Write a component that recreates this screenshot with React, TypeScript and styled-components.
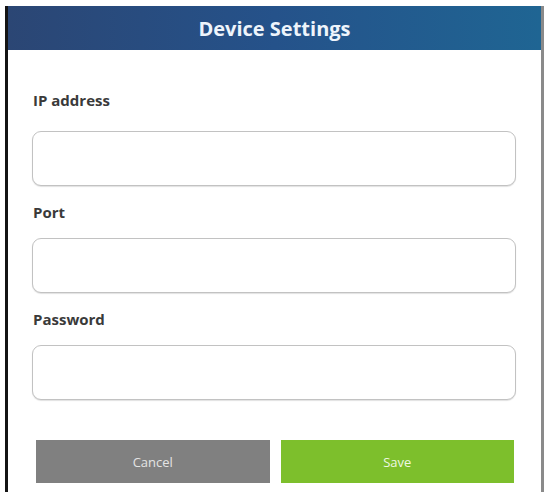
import React from 'react';
import styled, { createGlobalStyle } from 'styled-components';

const GlobalStyle = createGlobalStyle`
    html, body {
        margin: 0;
        padding: 0;
        background: #fff;
        font-family: "Open Sans", "Noto Sans", sans-serif;
    }
`;

const Panel = styled.div`
    margin: 6px 4px 0 5px;
    min-height: 486px;
    box-sizing: border-box;
    border-left: 3px solid #141414;
    border-right: 3px solid #8a8a8a;
    display: flex;
    flex-direction: column;
`;

const Header = styled.div`
    height: 44px;
    display: flex;
    align-items: center;
    justify-content: center;
    background: linear-gradient(90deg, #2b4674 0%, #25528a 50%, #1f6593 100%);
    color: #eef4fb;
    font-size: 20px;
    font-weight: 700;
`;

const Body = styled.div`
    padding: 40px 25px 0 24px;
    display: flex;
    flex-direction: column;
`;

const Label = styled.label`
    display: block;
    height: 20px;
    line-height: 20px;
    font-size: 15px;
    font-weight: 700;
    color: #3a3a3a;
    margin: 16px 0 16px 1px;

    &:first-child {
        margin-top: 0;
        margin-bottom: 21px;
    }
`;

const Input = styled.input`
    box-sizing: border-box;
    width: 100%;
    height: 55px;
    border: 1.5px solid #c2c2c2;
    border-radius: 9px;
    background: #fff;
    box-shadow: 0 1px 1px rgba(0, 0, 0, 0.12);
    outline: none;
    padding: 0 12px;
    font-size: 15px;
`;

const ButtonRow = styled.div`
    display: flex;
    gap: 11px;
    margin: 40px 2px 8px 4px;
`;

interface ActionProps {
    $tone: 'grey' | 'green';
}

const ActionButton = styled.button<ActionProps>`
    flex: 1;
    height: 43px;
    border: none;
    border-radius: 0;
    cursor: pointer;
    font-family: inherit;
    font-size: 13px;
    background: ${(p) => (p.$tone === 'grey' ? '#808080' : '#7dbf2c')};
    color: ${(p) => (p.$tone === 'grey' ? '#e4e4e4' : '#eef8e2')};
`;

const fields = ['IP address', 'Port', 'Password'];

const App = () => (
    <>
        <GlobalStyle />
        <Panel>
            <Header>Device Settings</Header>
            <Body>
                {fields.map((f) => (
                    <React.Fragment key={f}>
                        <Label>{f}</Label>
                        <Input type={f === 'Password' ? 'password' : 'text'} />
                    </React.Fragment>
                ))}
                <ButtonRow>
                    <ActionButton $tone="grey">Cancel</ActionButton>
                    <ActionButton $tone="green">Save</ActionButton>
                </ButtonRow>
            </Body>
        </Panel>
    </>
);

export default App;
